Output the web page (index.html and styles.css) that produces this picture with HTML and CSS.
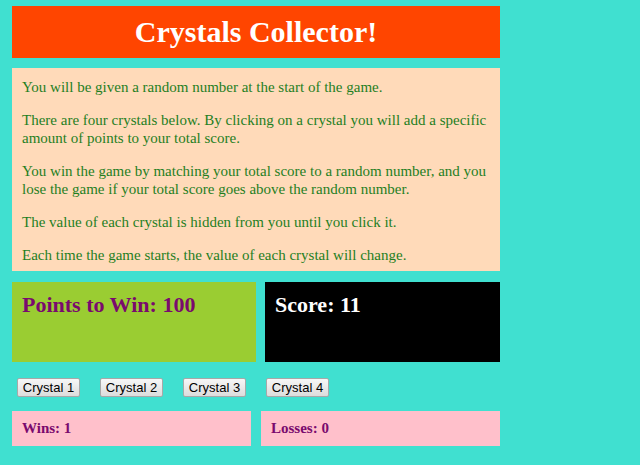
FILE: index.html
```html
<!DOCTYPE html>
<html>
<head>
<meta charset="utf-8">
<title>Crystals Collector</title>
<link rel="stylesheet" href="styles.css">
</head>
<body>
<div class="container">
  <header class="banner">
    <h1 class="title">Crystals Collector!</h1>
  </header>
  <section class="instructions">
    <p>You will be given a random number at the start of the game.</p>
    <p>There are four crystals below. By clicking on a crystal you will add a specific amount of points to your total score.</p>
    <p>You win the game by matching your total score to a random number, and you lose the game if your total score goes above the random number.</p>
    <p>The value of each crystal is hidden from you until you click it.</p>
    <p>Each time the game starts, the value of each crystal will change.</p>
  </section>
  <div class="score-row">
    <div class="target">Points to Win: 100</div>
    <div class="score">Score: 11</div>
  </div>
  <div class="crystals">
    <button class="crystal">Crystal 1</button>
    <button class="crystal">Crystal 2</button>
    <button class="crystal">Crystal 3</button>
    <button class="crystal">Crystal 4</button>
  </div>
  <div class="tally-row">
    <div class="tally wins">Wins: 1</div>
    <div class="tally losses">Losses: 0</div>
  </div>
</div>
</body>
</html>
```
FILE: styles.css
```css
html, body {
  margin: 0;
  padding: 0;
  background: #40e0d0;
  height: 100%;
}
body {
  font-family: "Liberation Serif", "Times New Roman", serif;
}
.container {
  width: 488px;
  padding: 6px 0 0 12px;
  display: flex;
  flex-direction: column;
}
.banner {
  background: #ff4500;
  height: 52px;
  display: flex;
  align-items: center;
  justify-content: center;
}
.title {
  margin: 0;
  color: #fff;
  font-size: 30px;
  font-weight: bold;
  line-height: 1;
}
.instructions {
  margin-top: 10px;
  background: #ffdab9;
  color: #1f7f1f;
  font-size: 15px;
  line-height: 18px;
  padding: 10px 10px 7px 10px;
  height: 186px;
}
.instructions p {
  margin: 0 0 15px 0;
}
.instructions p:last-child {
  margin-bottom: 0;
}
.score-row {
  margin-top: 11px;
  display: flex;
  gap: 9px;
  height: 80px;
}
.target, .score {
  font-size: 22px;
  font-weight: bold;
  padding: 10px 10px;
  line-height: 26px;
}
.target {
  width: 224px;
  background: #9acd32;
  color: #7a0a6e;
}
.score {
  flex: 1;
  background: #000;
  color: #fff;
}
.crystals {
  display: flex;
  gap: 20px;
  padding: 16px 0 0 5px;
  height: 33px;
}
.crystal {
  font-family: "Liberation Sans", Arial, sans-serif;
  font-size: 13px;
  width: 63px;
  height: 19px;
  padding: 0;
  border: 1px solid #a8a8a8;
  border-radius: 2px;
  background: linear-gradient(#f7f7f7, #dcdcdc);
  color: #000;
}
.tally-row {
  display: flex;
  gap: 10px;
  height: 35px;
}
.tally {
  background: #ffc0cb;
  color: #7a0a6e;
  font-size: 15px;
  font-weight: bold;
  padding: 0 10px;
  display: flex;
  align-items: center;
}
.wins {
  width: 219px;
}
.losses {
  flex: 1;
}
```
